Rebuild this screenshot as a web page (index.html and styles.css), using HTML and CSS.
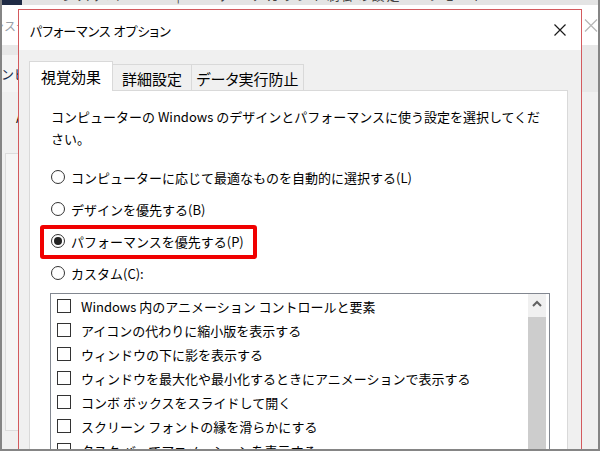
FILE: index.html
```html
<!DOCTYPE html>
<html lang="ja">
<head>
<meta charset="utf-8">
<title>パフォーマンス オプション</title>
<link rel="stylesheet" href="styles.css">
</head>
<body>
<div class="desktop">
  <div class="topstrip"><span class="topstrip-dark"></span><span class="topstrip-text">システム ー ーー| ユーザー アカウント制御の設定 ー リモート ー ーー</span></div>

  <div class="bgwin">
    <div class="bgwin-title">
      <span class="bgwin-title-text">システムのプロパティ</span>
      <svg class="bgwin-close" width="15" height="13" viewBox="0 0 15 13"><path d="M1 0.5 L13 12.5 M13 0.5 L1 12.5" stroke="#b8b8b8" stroke-width="1.3" fill="none"/></svg>
    </div>
    <div class="bgwin-tabs"><span class="bgwin-tab">コンピューター名</span></div>
    <div class="bgwin-body">
      <p class="bgwin-text">Administrator としてログオンしない場合は、これらのほとんどは変更できません。</p>
      <div class="bgwin-group"><div class="bgwin-group-inner"></div></div>
    </div>
  </div>

  <div class="dialog">
    <div class="dlg-title">
      <span class="dlg-title-text">パフォーマンス オプション</span>
      <svg class="dlg-close" width="12" height="12" viewBox="0 0 12 12"><path d="M0.5 0.5 L11.5 11.5 M11.5 0.5 L0.5 11.5" stroke="#1a1a1a" stroke-width="1.2" fill="none"/></svg>
    </div>
    <div class="dlg-body">
      <div class="tabs">
        <div class="tab tab-active tab-w1">視覚効果</div>
        <div class="tab tab-w2">詳細設定</div>
        <div class="tab tab-w3">データ実行防止</div>
      </div>
      <div class="panel">
        <p class="desc">コンピューターの Windows のデザインとパフォーマンスに使う設定を選択してくだ<br>さい。</p>
        <div class="options">
          <div class="radio-row"><span class="radio"></span><span>コンピューターに応じて最適なものを自動的に選択する(L)</span></div>
          <div class="radio-row"><span class="radio"></span><span>デザインを優先する(B)</span></div>
          <div class="radio-row"><span class="radio radio-on"></span><span>パフォーマンスを優先する(P)</span></div>
          <div class="radio-row"><span class="radio"></span><span>カスタム(C):</span></div>
        </div>
        <div class="highlight"></div>
        <div class="listbox">
          <div class="list-items">
            <div class="item"><span class="check"></span><span>Windows 内のアニメーション コントロールと要素</span></div>
            <div class="item"><span class="check"></span><span>アイコンの代わりに縮小版を表示する</span></div>
            <div class="item"><span class="check"></span><span>ウィンドウの下に影を表示する</span></div>
            <div class="item"><span class="check"></span><span>ウィンドウを最大化や最小化するときにアニメーションで表示する</span></div>
            <div class="item"><span class="check"></span><span>コンボ ボックスをスライドして開く</span></div>
            <div class="item"><span class="check"></span><span>スクリーン フォントの縁を滑らかにする</span></div>
            <div class="item"><span class="check"></span><span>タスク バーでアニメーションを表示する</span></div>
          </div>
          <div class="scrollbar">
            <div class="sb-up"><svg width="10" height="7" viewBox="0 0 10 7"><path d="M1 6 L5 2 L9 6" stroke="#606060" stroke-width="2" fill="none"/></svg></div>
            <div class="sb-thumb"></div>
          </div>
        </div>
      </div>
    </div>
  </div>
</div>
</body>
</html>
```

FILE: styles.css
```css
* { box-sizing: border-box; }
html, body { margin: 0; padding: 0; }
body {
  width: 600px;
  height: 451px;
  overflow: hidden;
  background: #f0f0f0;
  font-family: "Noto Sans CJK JP", "Noto Sans", sans-serif;
  color: #000;
}
.desktop {
  position: relative;
  width: 600px;
  height: 451px;
  overflow: hidden;
  border: 2px solid #858585;
  border-top: 0;
  background: #f0f0f0;
}

/* top strip with cut-off text of windows behind */
.topstrip {
  position: absolute;
  left: 0; right: 0; top: 0;
  height: 5px;
  overflow: hidden;
  background: #e4e4e4;
  display: flex;
  z-index: 2;
}
.topstrip-dark { width: 20px; height: 5px; background: #1f2b45; flex: none; }
.topstrip-text {
  display: block;
  margin-top: -12px;
  margin-left: 40px;
  font-size: 13px;
  line-height: 14px;
  color: #444;
  white-space: nowrap;
  letter-spacing: 2px;
}

/* background window */
.bgwin {
  position: absolute;
  left: -24px;
  top: 5px;
  width: 622px;
  bottom: 0;
  background: #f0f0f0;
  display: flex;
  flex-direction: column;
}
.bgwin-title {
  height: 40px;
  background: #fff;
  display: flex;
  align-items: center;
  justify-content: space-between;
  padding: 0 1px 0 14px;
  font-size: 12px;
  color: #9aa0a8;
}
.bgwin-close { margin-top: 1px; }
.bgwin-tabs {
  height: 47px;
  background: #e8e8e8;
  padding: 10px 0 0 10px;
  display: flex;
}
.bgwin-tab {
  background: #f4f4f4;
  height: 37px;
  display: flex;
  align-items: center;
  font-size: 13px;
  color: #1b2d4e;
  padding: 0 4px 0 0;
}
.bgwin-body {
  flex: 1;
  padding: 16px 0 0 38px;
  background: #f0f0f0;
}
.bgwin-text {
  margin: 0;
  font-size: 13px;
  line-height: 20px;
  color: #111;
  white-space: nowrap;
}
.bgwin-group {
  margin: 25px 0 0 -11px;
  width: 40px;
  height: 278px;
  border: 1px solid #dcdcdc;
  background: #f5f5f5;
  padding: 0 0 0 12px;
}
.bgwin-group-inner { height: 100%; border-left: 1px solid #d0d0d0; }

/* dialog */
.dialog {
  position: absolute;
  left: 16px;
  top: 9px;
  width: 564px;
  bottom: -40px;
  border: 1px solid #d35a5e;
  background: #f0f0f0;
  display: flex;
  flex-direction: column;
  z-index: 1;
}
.dlg-title {
  height: 40px;
  flex: none;
  background: #fff;
  display: flex;
  align-items: center;
  justify-content: space-between;
  padding: 0 15px 0 11px;
  font-size: 13px;
  font-feature-settings: "palt";
}
.dlg-body {
  flex: 1;
  padding: 11px 14px 0 10px;
  display: flex;
  flex-direction: column;
}

.tabs {
  display: flex;
  align-items: flex-end;
  height: 30px;
  margin-bottom: -1px;
  position: relative;
  z-index: 1;
}
.tab {
  height: 26px;
  margin-bottom: 1px;
  border: 1px solid #d9d9d9;
  border-left: 0;
  border-bottom: 0;
  background: #f0f0f0;
  font-size: 15px;
  font-feature-settings: "palt";
  display: flex;
  align-items: center;
  justify-content: center;
  padding-top: 1px;
}
.tab-active {
  height: 30px;
  margin-bottom: 0;
  border-left: 1px solid #d9d9d9;
  background: #fff;
  padding-top: 0;
}
.tab-w1 { width: 84px; }
.tab-w2 { width: 79px; }
.tab-w3 { width: 112px; }

.panel {
  flex: 1;
  width: 539px;
  background: #fff;
  border: 1px solid #d9d9d9;
  padding: 15px 0 0 21px;
  position: relative;
}
.desc {
  margin: 0;
  width: 505px;
  font-size: 13px;
  line-height: 22px;
  white-space: nowrap;
}
.options { margin-top: 11px; }
.radio-row {
  display: flex;
  align-items: center;
  gap: 6px;
  height: 32px;
  font-size: 13px;
}
.radio {
  width: 14px;
  height: 14px;
  flex: none;
  border: 1px solid #333;
  border-radius: 50%;
  background: #fff;
  display: flex;
  align-items: center;
  justify-content: center;
}
.radio-on::after {
  content: "";
  width: 8px;
  height: 8px;
  border-radius: 50%;
  background: #222;
}
.highlight {
  position: absolute;
  left: 10px;
  top: 134px;
  width: 217px;
  height: 34px;
  border: 4px solid #f00000;
  border-radius: 3px;
}

.listbox {
  margin: 4px 0 0 -1px;
  width: 500px;
  height: 200px;
  border: 1px solid #828790;
  display: flex;
}
.list-items { flex: 1; }
.item {
  height: 24px;
  display: flex;
  align-items: center;
  gap: 10px;
  padding-left: 6px;
  font-size: 13px;
  white-space: nowrap;
}
.check {
  width: 14px;
  height: 14px;
  flex: none;
  border: 1px solid #333;
  background: #fff;
}
.scrollbar {
  width: 18px;
  margin-right: 3px;
  background: #f0f0f0;
  display: flex;
  flex-direction: column;
}
.sb-up {
  height: 23px;
  display: flex;
  align-items: center;
  justify-content: center;
  padding-bottom: 4px;
}
.sb-thumb { flex: 1; background: #cdcdcd; }
```
